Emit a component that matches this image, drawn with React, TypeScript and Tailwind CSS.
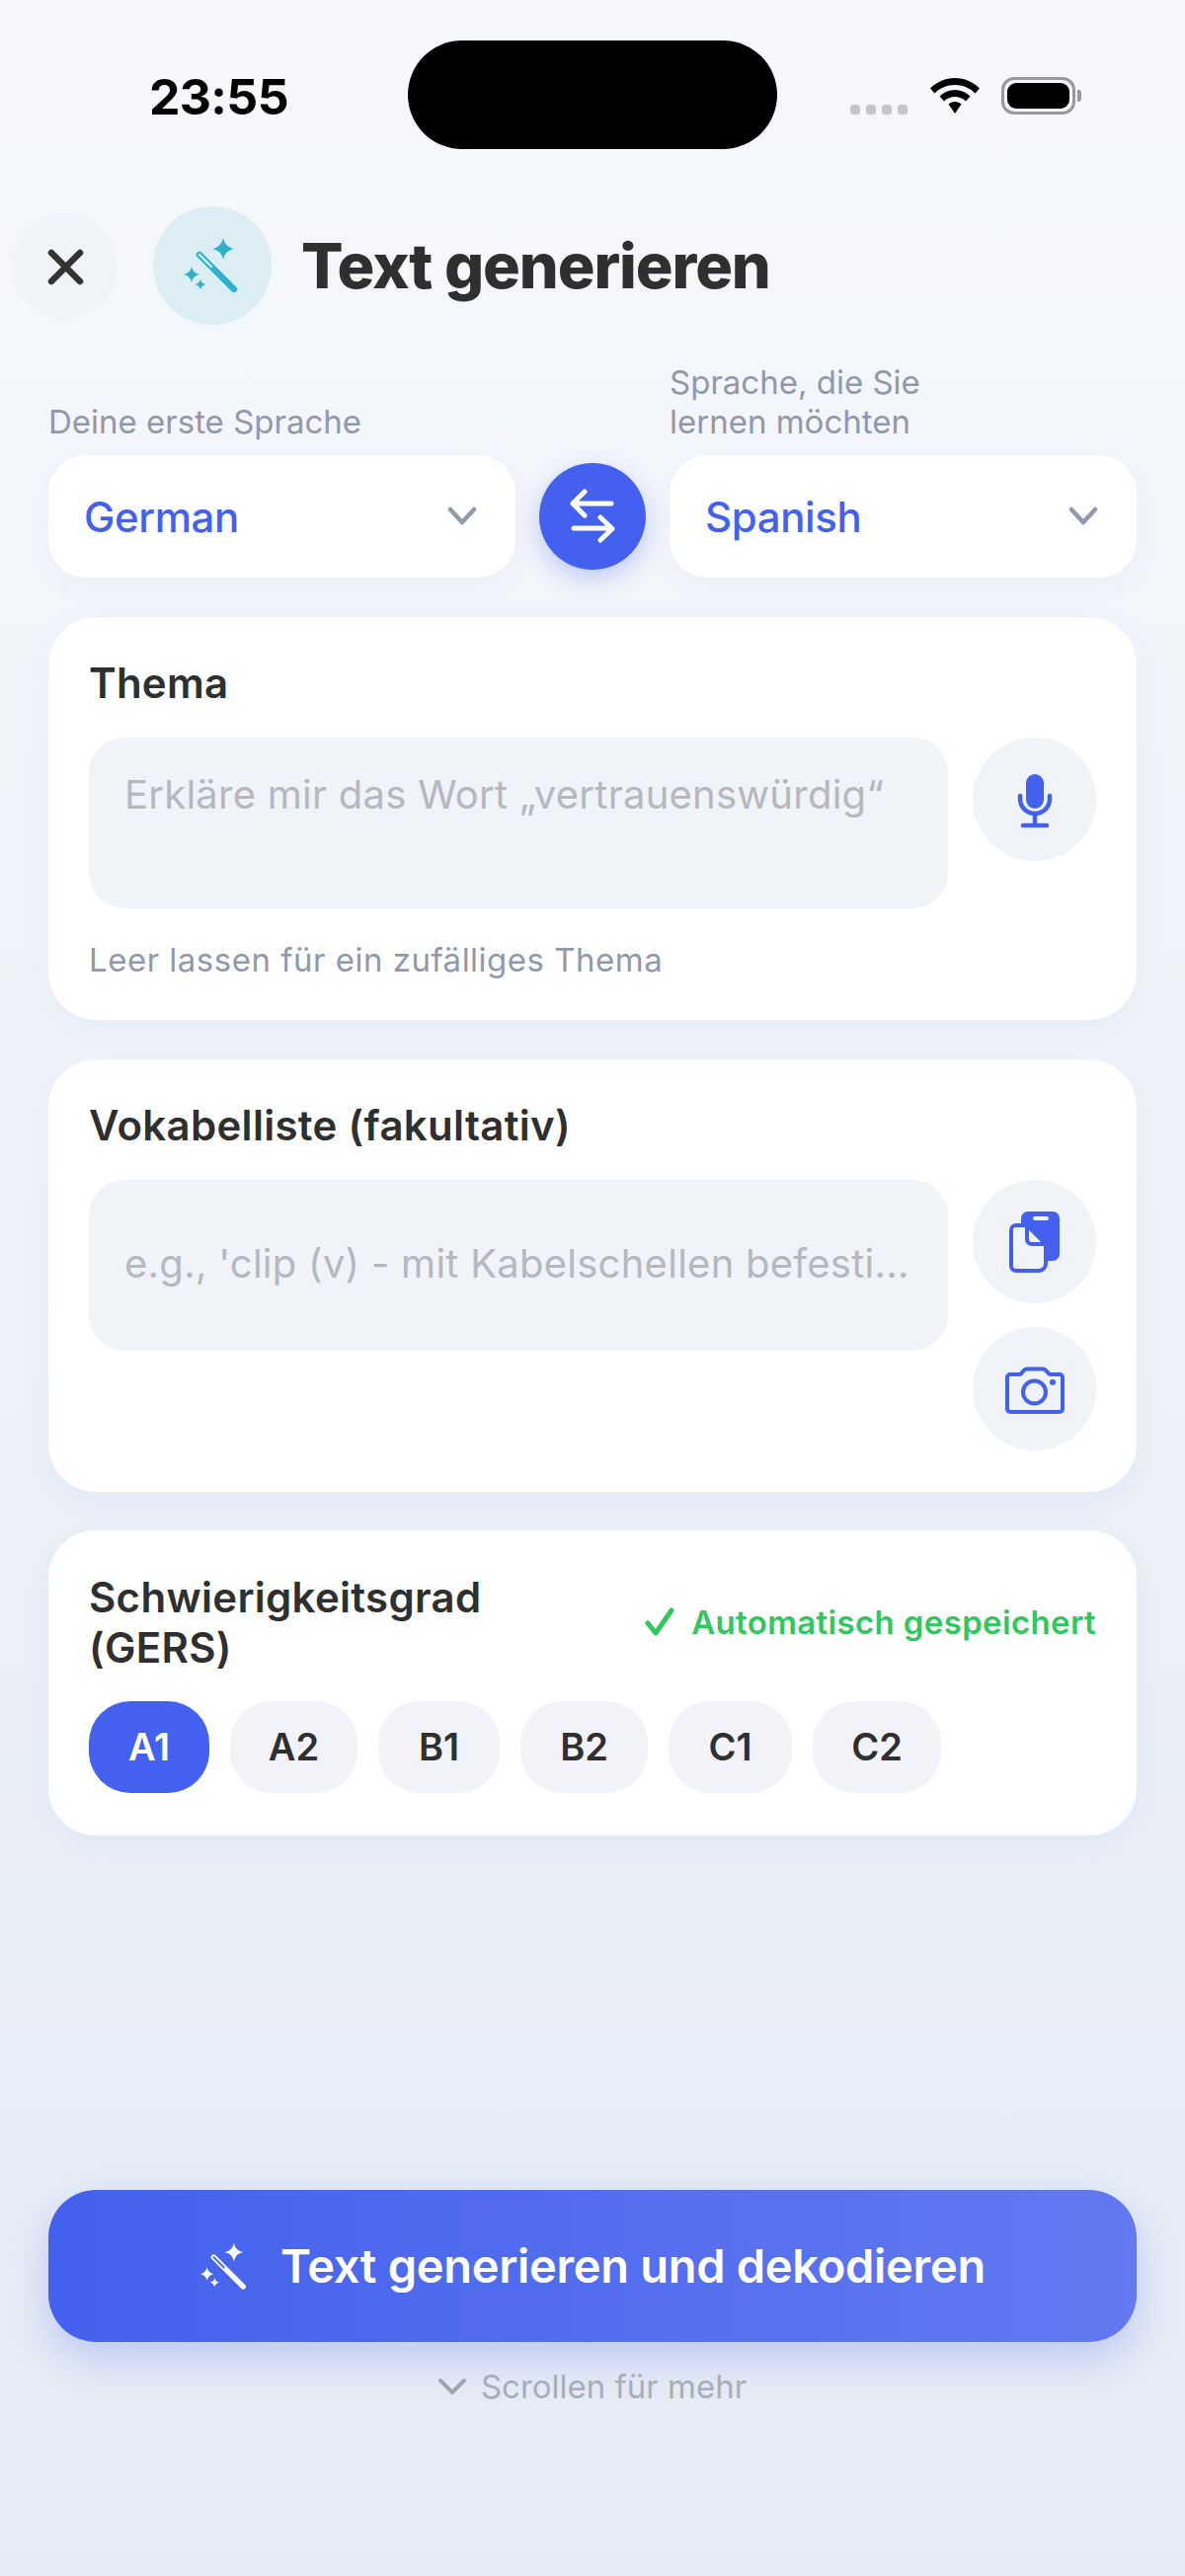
import React from "react";

const star = (cx: number, cy: number, r: number) => {
  const k = r * 0.16;
  return `M${cx} ${cy - r}Q${cx + k} ${cy - k} ${cx + r} ${cy}Q${cx + k} ${cy + k} ${cx} ${cy + r}Q${cx - k} ${cy + k} ${cx - r} ${cy}Q${cx - k} ${cy - k} ${cx} ${cy - r}Z`;
};

function WandIcon({ color, inner, size = 60 }: { color: string; inner: string; size?: number }) {
  return (
    <svg width={size} height={size} viewBox="0 0 60 60" fill="none">
      <path d={star(41, 13, 11)} fill={color} />
      <path d={star(9, 39, 8)} fill={color} />
      <path d={star(18, 49, 5.5)} fill={color} />
      <path d="M17 19L52 54" stroke={color} strokeWidth="6.5" strokeLinecap="round" />
      <path d="M17 19L29 31" stroke={inner} strokeWidth="2.4" strokeLinecap="round" />
    </svg>
  );
}

function Chevron() {
  return (
    <svg width="30" height="20" viewBox="0 0 30 20" fill="none">
      <path d="M3 3L15 16L27 3" stroke="#9199ad" strokeWidth="4.5" strokeLinecap="round" strokeLinejoin="round" />
    </svg>
  );
}

function SelectBox({ value }: { value: string }) {
  return (
    <div className="flex h-[124px] items-center justify-between rounded-[38px] bg-white pl-[36px] pr-[39px] shadow-[0_8px_28px_rgba(67,97,238,0.04)]">
      <span className="text-[42px] font-medium tracking-[-0.4px] text-[#4361ee]">{value}</span>
      <Chevron />
    </div>
  );
}

function RoundButton({ children }: { children: React.ReactNode }) {
  return (
    <div className="h-[125px] w-[125px] rounded-full bg-[#f0f3f8]">
      <svg width="125" height="125" viewBox="0 0 125 125" fill="none">
        {children}
      </svg>
    </div>
  );
}

const levels = [
  { label: "A1", width: "w-[122px]", active: true },
  { label: "A2", width: "w-[129px]", active: false },
  { label: "B1", width: "w-[123px]", active: false },
  { label: "B2", width: "w-[129px]", active: false },
  { label: "C1", width: "w-[125px]", active: false },
  { label: "C2", width: "w-[130px]", active: false },
];

export default function App() {
  return (
    <div className="flex h-[2609px] w-[1200px] flex-col overflow-hidden bg-gradient-to-b from-[#f6f8fb] to-[#e4ebf5] pt-[41px] text-[#2f2f2f] [font-family:Inter,sans-serif]">
      {/* Status bar */}
      <div className="flex h-[110px] items-start pl-[151px]">
        <div className="mt-[30px] w-[262px] text-[50px] leading-[54px] font-bold tracking-[-0.7px] text-black">23:55</div>
        <div className="h-[110px] w-[374px] rounded-[55px] bg-black"></div>
        <div className="ml-[74px] mt-[65px] flex gap-[6px]">
          <span className="h-[10px] w-[10px] rounded-[3px] bg-[#c4c6cb]"></span>
          <span className="h-[10px] w-[10px] rounded-[3px] bg-[#c4c6cb]"></span>
          <span className="h-[10px] w-[10px] rounded-[3px] bg-[#c4c6cb]"></span>
          <span className="h-[10px] w-[10px] rounded-[3px] bg-[#c4c6cb]"></span>
        </div>
        <svg className="ml-[23px] mt-[38px]" width="50" height="36" viewBox="0 0 50 36" fill="black">
          <path d="M25 0C15.500 0 7 3.800 0 10.500L4.500 15.500C10 10 17 7 25 7S40 10 45.500 15.500L50 10.500C43 3.800 34.500 0 25 0Z" />
          <path d="M25 12C19 12 13.800 14.300 9.500 18.500L14 23.500C17 20.600 20.800 19 25 19S33 20.600 36 23.500L40.500 18.500C36.200 14.300 31 12 25 12Z" />
          <path d="M25 24C22.400 24 20.200 25 18.500 26.500L25 36L31.500 26.500C29.800 25 27.600 24 25 24Z" />
        </svg>
        <div className="ml-[22px] mt-[37px] flex items-center">
          <div className="flex h-[38px] w-[75px] items-center justify-center rounded-[13px] border-[3px] border-[#98999c]">
            <div className="h-[26px] w-[63px] rounded-[9px] bg-black"></div>
          </div>
          <div className="ml-[2px] h-[12px] w-[4px] rounded-r-[3px] bg-[#98999c]"></div>
        </div>
      </div>

      {/* Header */}
      <div className="mt-[58px] flex h-[120px] items-center pl-[12px]">
        <div className="h-[107px] w-[107px] rounded-full bg-[#f0f3f8]">
          <svg width="107" height="107" viewBox="0 0 107 107" fill="none">
            <path d="M40 40L69 69M69 40L40 69" stroke="#333" strokeWidth="6.5" strokeLinecap="round" />
          </svg>
        </div>
        <div className="ml-[36px] flex h-[120px] w-[120px] items-center justify-center rounded-full bg-[#dceef4]">
          <WandIcon color="#2fb0cb" inner="#dceef4" />
        </div>
        <h1 className="ml-[30px] text-[63px] leading-[70px] font-extrabold tracking-[-1.1px] text-[#2f2f2f]">Text generieren</h1>
      </div>

      {/* Languages */}
      <div className="mt-[38px] flex items-end gap-[24px] px-[49px]">
        <div className="w-[473px]">
          <div className="mb-[14px] text-[33px] leading-[40px] text-[#9298ab]">Deine erste Sprache</div>
          <SelectBox value="German" />
        </div>
        <div className="mb-[8px] h-[108px] w-[108px] rounded-full bg-[#4361ee] shadow-[0_8px_24px_rgba(67,97,238,0.3)]">
          <svg width="108" height="108" viewBox="0 0 108 108" fill="none">
            <path d="M73 41H35M46 29L34 41L46 53M35 66H73M62 55L74 66.500L62 78" stroke="white" strokeWidth="5" strokeLinecap="round" strokeLinejoin="round" />
          </svg>
        </div>
        <div className="w-[473px]">
          <div className="mb-[14px] text-[33px] leading-[40px] text-[#9298ab]">
            Sprache, die Sie
            <br />
            lernen möchten
          </div>
          <SelectBox value="Spanish" />
        </div>
      </div>

      {/* Thema */}
      <div className="mx-[49px] mt-[40px] rounded-[48px] bg-white px-[41px] pt-[42px] pb-[41px] shadow-[0_10px_32px_rgba(67,97,238,0.05)]">
        <div className="text-[42px] leading-[50px] font-semibold tracking-[0.2px]">Thema</div>
        <div className="mt-[30px] flex justify-between">
          <div className="h-[173px] w-[870px] rounded-[36px] bg-[#f0f3f8] px-[36px] pt-[35px] text-[40px] leading-[46px] tracking-[0.25px] text-[#b6b8c0]">
            Erkläre mir das Wort „vertrauenswürdig“
          </div>
          <RoundButton>
            <rect x="54" y="37" width="18" height="35" rx="9" fill="#4361ee" />
            <path d="M48 59V62A15 15 0 0 0 78 62V59" stroke="#4361ee" strokeWidth="4.500" strokeLinecap="round" />
            <path d="M63 78V89M51 89H75" stroke="#4361ee" strokeWidth="4.500" strokeLinecap="round" />
          </RoundButton>
        </div>
        <div className="mt-[32px] text-[33px] leading-[40px] tracking-[0.5px] text-[#9298ab]">Leer lassen für ein zufälliges Thema</div>
      </div>

      {/* Vokabelliste */}
      <div className="mx-[49px] mt-[40px] rounded-[48px] bg-white px-[41px] pt-[42px] pb-[42px] shadow-[0_10px_32px_rgba(67,97,238,0.05)]">
        <div className="text-[42px] leading-[50px] font-semibold tracking-[0.3px]">Vokabelliste (fakultativ)</div>
        <div className="mt-[30px] flex justify-between">
          <div className="flex h-[173px] w-[870px] items-center rounded-[36px] bg-[#f0f3f8] px-[36px] pb-[4px] text-[40px] leading-[46px] tracking-[0.25px] whitespace-nowrap text-[#b6b8c0]">
            e.g., 'clip (v) - mit Kabelschellen befesti...
          </div>
          <div className="flex flex-col gap-[24px]">
            <RoundButton>
              <rect x="49" y="32" width="39" height="50" rx="7" fill="#4361ee" />
              <rect x="61" y="37" width="16" height="4" rx="2" fill="#f0f3f8" />
              <path d="M44 46H55L74 65V85A7 7 0 0 1 67 92H44A5 5 0 0 1 39 87V51A5 5 0 0 1 44 46Z" fill="#f0f3f8" stroke="#4361ee" strokeWidth="4" strokeLinejoin="round" />
              <path d="M55 46V60A5 5 0 0 0 60 65H74" fill="none" stroke="#4361ee" strokeWidth="4" strokeLinejoin="round" />
            </RoundButton>
            <RoundButton>
              <path d="M38 48H47A3 3 0 0 0 49.500 46.800L52 43.800A4 4 0 0 1 55 42.500H71A4 4 0 0 1 74 43.800L76.500 46.800A3 3 0 0 0 79 48H88A3 3 0 0 1 91 51V83A3 3 0 0 1 88 86H38A3 3 0 0 1 35 83V51A3 3 0 0 1 38 48Z" stroke="#4361ee" strokeWidth="4" strokeLinejoin="round" />
              <circle cx="62.500" cy="66" r="11.500" stroke="#4361ee" strokeWidth="4" />
              <circle cx="81" cy="56" r="3" fill="#4361ee" />
            </RoundButton>
          </div>
        </div>
      </div>

      {/* Schwierigkeitsgrad */}
      <div className="mx-[49px] mt-[39px] rounded-[48px] bg-white px-[41px] pt-[42px] pb-[43px] shadow-[0_10px_32px_rgba(67,97,238,0.05)]">
        <div className="flex items-center justify-between">
          <div className="w-[480px] text-[42px] leading-[51px] font-semibold tracking-[0.3px]">Schwierigkeitsgrad (GERS)</div>
          <div className="flex items-center gap-[17px]">
            <svg width="30" height="30" viewBox="0 0 30 30" fill="none">
              <path d="M3 16L11 26L27 3" stroke="#30c85e" strokeWidth="5" strokeLinecap="round" strokeLinejoin="round" />
            </svg>
            <span className="text-[33px] leading-[40px] font-semibold tracking-[0.35px] text-[#30c85e]">Automatisch gespeichert</span>
          </div>
        </div>
        <div className="mt-[29px] flex gap-[21px]">
          {levels.map((level) => (
            <div
              key={level.label}
              className={`flex h-[93px] items-center justify-center rounded-[42px] text-[38px] font-semibold ${level.width} ${
                level.active ? "bg-[#4361ee] text-white" : "bg-[#f1f3f8] text-[#2f2f2f]"
              }`}
            >
              {level.label}
            </div>
          ))}
        </div>
      </div>

      {/* Generate button */}
      <div className="mx-[49px] mt-[359px] flex h-[154px] items-center justify-center gap-[31px] rounded-[48px] bg-gradient-to-r from-[#4361ee] to-[#6279f0] shadow-[0_16px_40px_rgba(67,97,238,0.25)]">
        <WandIcon color="white" inner="#4a67ee" size={51} />
        <span className="text-[47px] font-semibold tracking-[-0.3px] text-white">Text generieren und dekodieren</span>
      </div>

      {/* Scroll hint */}
      <div className="mt-[25px] flex items-center justify-center gap-[15px] text-[33px] leading-[40px] text-[#a9adb9]">
        <svg width="28" height="18" viewBox="0 0 28 18" fill="none">
          <path d="M2 3L14 15L26 3" stroke="#a0a5b2" strokeWidth="4" strokeLinecap="round" strokeLinejoin="round" />
        </svg>
        <span>Scrollen für mehr</span>
      </div>
    </div>
  );
}
